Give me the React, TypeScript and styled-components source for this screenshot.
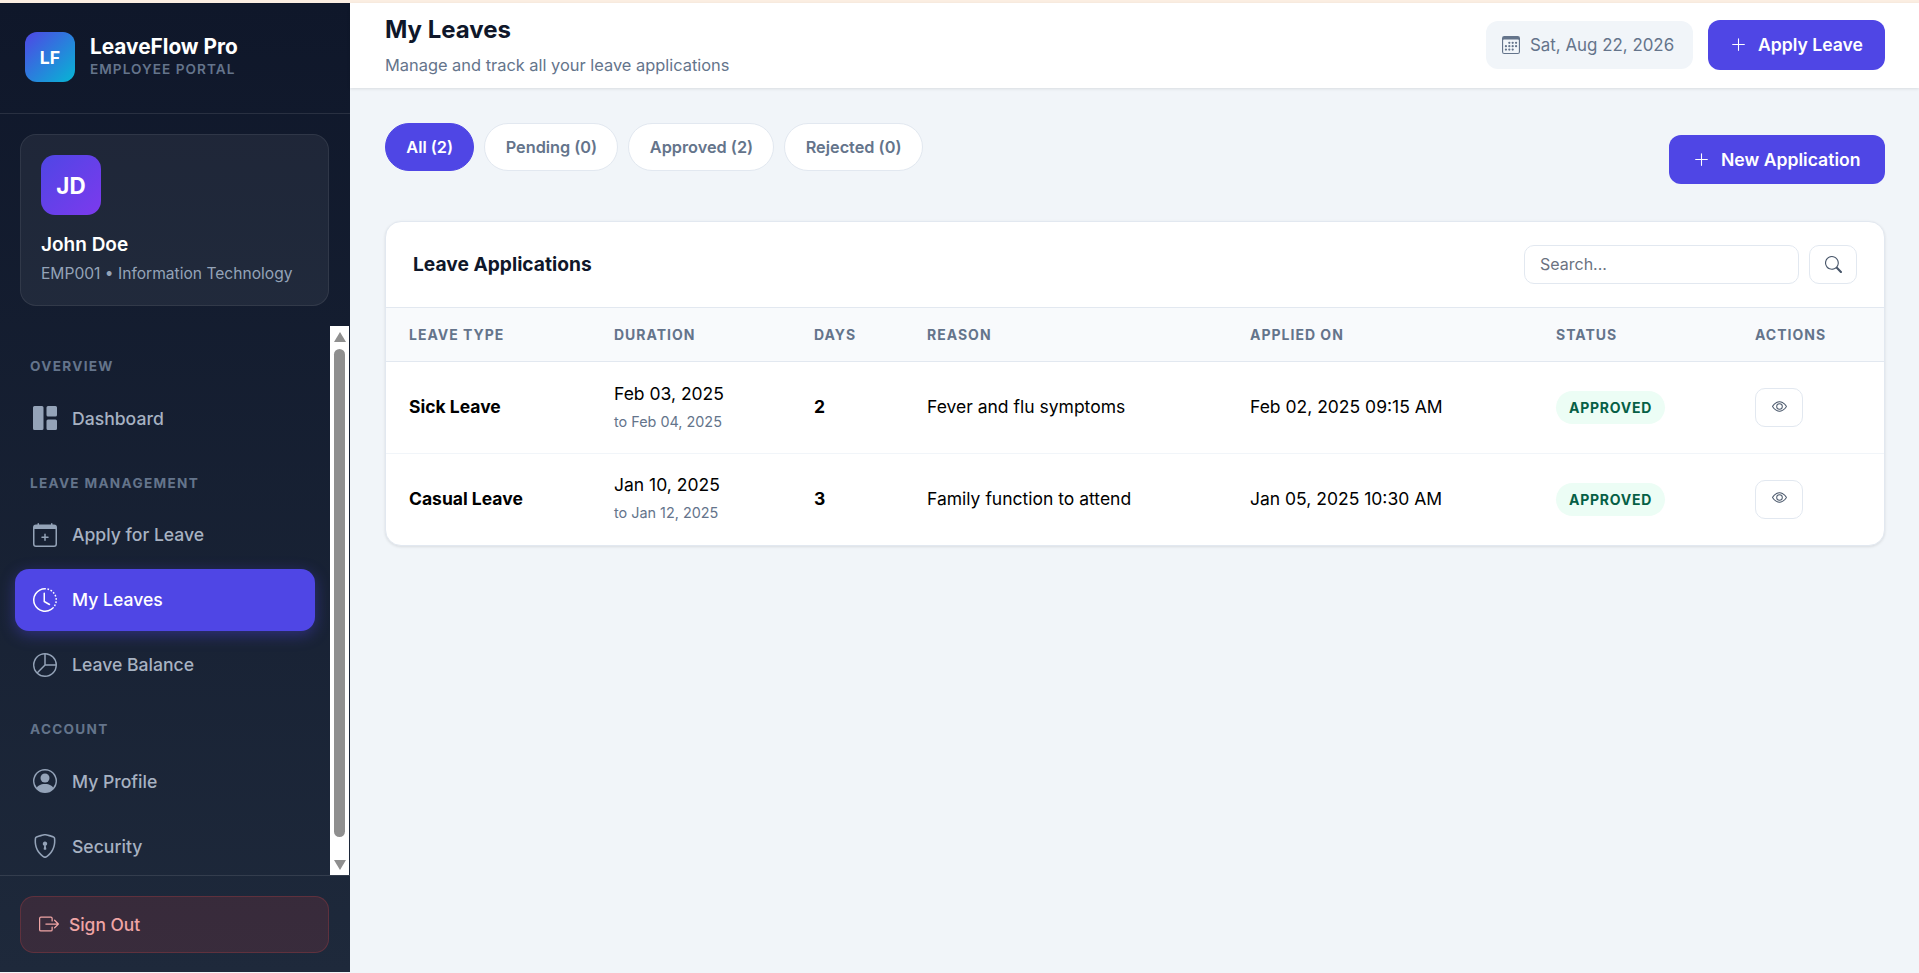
import styled, { createGlobalStyle } from 'styled-components';
import {
  BsGrid1X2Fill,
  BsCalendarPlus,
  BsClockHistory,
  BsPieChart,
  BsPersonCircle,
  BsShieldLock,
  BsBoxArrowRight,
  BsCalendar3,
  BsPlusLg,
  BsSearch,
  BsEye,
} from 'react-icons/bs';

const GlobalStyle = createGlobalStyle`
  * { box-sizing: border-box; }
  html, body { margin: 0; padding: 0; height: 100%; overflow: hidden; }
  body {
    background: #f1f5f9;
    font-family: Inter, "Liberation Sans", sans-serif;
    color: #0f172a;
  }
`;

const TopStrip = styled.div`
  height: 3px;
  background: #fbeee2;
`;

const Shell = styled.div`
  display: flex;
  height: 969px;
`;

const Sidebar = styled.aside`
  width: 350px;
  flex-shrink: 0;
  display: flex;
  flex-direction: column;
  background: linear-gradient(180deg, #0f172a 0%, #1e293b 100%);
`;

const Brand = styled.div`
  height: 111px;
  flex-shrink: 0;
  display: flex;
  align-items: center;
  gap: 15px;
  padding: 0 25px 2px;
  border-bottom: 1px solid rgba(255, 255, 255, 0.1);
`;

const BrandLogo = styled.div`
  width: 50px;
  height: 50px;
  border-radius: 12px;
  background: linear-gradient(135deg, #4f46e5, #06b6d4);
  color: #fff;
  font-size: 17.6px;
  font-weight: 700;
  display: flex;
  align-items: center;
  justify-content: center;
`;

const BrandName = styled.div`
  color: #fff;
  font-size: 20.8px;
  font-weight: 700;
  line-height: 25px;
  margin-top: -2px;
`;

const BrandSub = styled.div`
  color: #64748b;
  font-size: 13.6px;
  font-weight: 600;
  letter-spacing: 1.05px;
  line-height: 18px;
  margin-top: 1px;
`;

const ProfileWrap = styled.div`
  height: 212px;
  flex-shrink: 0;
  padding: 20px 20px 0;
`;

const ProfileCard = styled.div`
  width: 309px;
  height: 172px;
  padding: 20px;
  border-radius: 16px;
  background: rgba(255, 255, 255, 0.06);
  border: 1px solid rgba(255, 255, 255, 0.08);
`;

const Avatar = styled.div`
  width: 60px;
  height: 60px;
  border-radius: 14px;
  background: linear-gradient(135deg, #4f46e5, #7c3aed);
  color: #fff;
  font-size: 22.4px;
  font-weight: 700;
  display: flex;
  align-items: center;
  justify-content: center;
`;

const ProfileName = styled.div`
  margin-top: 16px;
  color: #fff;
  font-size: 19px;
  font-weight: 600;
  line-height: 27px;
`;

const ProfileMeta = styled.div`
  margin-top: 4px;
  color: #94a3b8;
  font-size: 15.6px;
  line-height: 24px;
  white-space: nowrap;
`;

const NavArea = styled.div`
  flex: 1;
  min-height: 0;
  display: flex;
`;

const NavList = styled.nav`
  width: 330px;
  flex-shrink: 0;
  overflow: hidden;
  padding: 0 15px;
`;

const ScrollRail = styled.div`
  width: 19px;
  display: flex;
  flex-direction: column;
  align-items: center;
  padding: 6px 0 5px;
  background: #fff;
`;

const ScrollArrow = styled.div<{ $down?: boolean }>`
  width: 0;
  height: 0;
  flex-shrink: 0;
  border-left: 6px solid transparent;
  border-right: 6px solid transparent;
  border-${({ $down }) => ($down ? 'top' : 'bottom')}: 10px solid #8f8f8f;
`;

const ScrollThumb = styled.div`
  width: 11px;
  height: 488px;
  margin: 7px 0 auto;
  border-radius: 6px;
  background: #8f8f8f;
`;

const NavLabel = styled.div<{ $first?: boolean }>`
  margin: ${({ $first }) => ($first ? '28px' : '21.5px')} 0 9px 15px;
  height: 24px;
  line-height: 24px;
  color: #64748b;
  font-size: 13.6px;
  font-weight: 700;
  letter-spacing: 1.3px;
`;

const NavItem = styled.a<{ $active?: boolean }>`
  height: 62px;
  margin-top: 3px;
  display: flex;
  align-items: center;
  gap: 15px;
  padding: 0 18px;
  border-radius: 14px;
  font-size: 17.6px;
  font-weight: 500;
  color: ${({ $active }) => ($active ? '#fff' : '#a7b2c2')};
  background: ${({ $active }) => ($active ? '#4f46e5' : 'transparent')};
  box-shadow: ${({ $active }) => ($active ? '0 4px 15px rgba(79, 70, 229, 0.4)' : 'none')};

  svg {
    width: 24px;
    height: 24px;
    flex-shrink: 0;
    color: ${({ $active }) => ($active ? '#fff' : '#94a3b8')};
  }
`;

const SidebarFooter = styled.div`
  height: 97px;
  flex-shrink: 0;
  padding: 20px;
  border-top: 1px solid rgba(255, 255, 255, 0.1);
`;

const SignOut = styled.button`
  width: 309px;
  height: 57px;
  display: flex;
  align-items: center;
  gap: 10px;
  padding: 0 18px 1px;
  border-radius: 14px;
  border: 1px solid rgba(239, 68, 68, 0.22);
  background: rgba(239, 68, 68, 0.13);
  color: #f0a5a5;
  font-family: inherit;
  font-size: 17.4px;
  font-weight: 500;

  svg {
    width: 20px;
    height: 20px;
  }
`;

const Main = styled.main`
  flex: 1;
  min-width: 0;
  display: flex;
  flex-direction: column;
`;

const Header = styled.header`
  height: 85px;
  flex-shrink: 0;
  display: flex;
  align-items: center;
  justify-content: space-between;
  padding: 0 34px 0 35px;
  background: #fff;
  box-shadow: 0 1px 3px rgba(0, 0, 0, 0.1);
`;

const HeaderText = styled.div`
  margin-bottom: 2px;
`;

const PageTitle = styled.h1`
  margin: 0;
  font-size: 24px;
  font-weight: 700;
  line-height: 36px;
  color: #0f172a;
`;

const PageSub = styled.p`
  margin: 5px 0 0;
  font-size: 16.4px;
  line-height: 24px;
  color: #64748b;
`;

const HeaderActions = styled.div`
  display: flex;
  align-items: center;
  gap: 15px;
  margin-bottom: 2px;
`;

const DateChip = styled.div`
  width: 207px;
  height: 48px;
  display: flex;
  align-items: center;
  gap: 10px;
  padding: 0 16px;
  border-radius: 12px;
  background: #f1f5f9;
  color: #64748b;
  font-size: 16.9px;
  white-space: nowrap;

  svg {
    width: 18px;
    height: 18px;
    flex-shrink: 0;
  }
`;

const PrimaryButton = styled.button<{ $h: number; $pad: number }>`
  height: ${({ $h }) => $h}px;
  display: flex;
  align-items: center;
  gap: 11px;
  padding: 0 ${({ $pad }) => $pad}px 1px;
  border: none;
  border-radius: 12px;
  background: #4f46e5;
  color: #fff;
  font-family: inherit;
  font-size: 17.6px;
  font-weight: 600;

  svg {
    width: 17px;
    height: 17px;
  }
`;

const Content = styled.div`
  flex: 1;
  padding: 35px 34px 0 35px;
`;

const Toolbar = styled.div`
  display: flex;
  justify-content: space-between;
  align-items: flex-start;
  height: 98px;
`;

const Tabs = styled.div`
  display: flex;
  gap: 10px;
`;

const Tab = styled.button<{ $active?: boolean }>`
  height: 48px;
  padding: 0 20.3px;
  border-radius: 24px;
  border: 1px solid ${({ $active }) => ($active ? '#4f46e5' : '#e2e8f0')};
  background: ${({ $active }) => ($active ? '#4f46e5' : '#fff')};
  color: ${({ $active }) => ($active ? '#fff' : '#64748b')};
  font-family: inherit;
  font-size: 16.3px;
  font-weight: 600;
`;

const NewWrap = styled.div`
  margin-top: 12px;
`;

const Card = styled.section`
  background: #fff;
  border: 1px solid #e2e8f0;
  border-radius: 16px;
  overflow: hidden;
  box-shadow: 0 1px 3px rgba(0, 0, 0, 0.1);
`;

const CardHead = styled.div`
  height: 85px;
  display: flex;
  align-items: center;
  justify-content: space-between;
  padding: 0 27px 1px;
`;

const CardTitle = styled.h2`
  margin: 0;
  font-size: 19.2px;
  font-weight: 700;
  color: #0f172a;
`;

const SearchRow = styled.div`
  display: flex;
  gap: 10px;
`;

const SearchInput = styled.input`
  width: 275px;
  height: 39px;
  padding: 0 15px;
  border: 1px solid #e2e8f0;
  border-radius: 10px;
  font-family: inherit;
  font-size: 16px;
  outline: none;

  &::placeholder {
    color: #6b7280;
  }
`;

const IconButton = styled.button<{ $w: number; $h: number; $size: number; $lift?: number }>`
  width: ${({ $w }) => $w}px;
  height: ${({ $h }) => $h}px;
  display: flex;
  align-items: center;
  justify-content: center;
  padding: 0 0 ${({ $lift }) => $lift ?? 0}px;
  border: 1px solid #e2e8f0;
  border-radius: 10px;
  background: #fff;
  color: #475569;

  svg {
    width: ${({ $size }) => $size}px;
    height: ${({ $size }) => $size}px;
  }
`;

const Table = styled.table`
  width: 100%;
  table-layout: fixed;
  border-collapse: collapse;
`;

const Th = styled.th<{ $w: number }>`
  width: ${({ $w }) => $w}px;
  height: 54px;
  padding: 0 0 0 23px;
  text-align: left;
  background: #f8fafc;
  border-top: 1px solid #e2e8f0;
  border-bottom: 1px solid #e2e8f0;
  color: #64748b;
  font-size: 14px;
  font-weight: 700;
  letter-spacing: 1px;
`;

const Td = styled.td<{ $strong?: boolean; $flush?: boolean }>`
  height: 92px;
  padding: 0 0 ${({ $flush }) => ($flush ? 0 : 2)}px 23px;
  color: #000;
  font-size: 17.5px;
  font-weight: ${({ $strong }) => ($strong ? 700 : 400)};
  border-bottom: 1px solid #f1f5f9;

  tr:last-child & {
    height: 91px;
    border-bottom: none;
  }
`;

const DateBlock = styled.div`
  margin-bottom: 2px;
`;

const DateMain = styled.div`
  line-height: 28px;
`;

const DateSub = styled.div`
  margin-top: 4px;
  font-size: 14.4px;
  line-height: 20px;
  color: #64748b;
`;

const Badge = styled.span`
  display: inline-flex;
  align-items: center;
  height: 33px;
  padding: 0 13px;
  border-radius: 17px;
  background: #ecfdf5;
  color: #065f46;
  font-size: 14px;
  font-weight: 700;
  letter-spacing: 0.75px;
`;

const columns = [
  { label: 'LEAVE TYPE', w: 205 },
  { label: 'DURATION', w: 200 },
  { label: 'DAYS', w: 113 },
  { label: 'REASON', w: 323 },
  { label: 'APPLIED ON', w: 306 },
  { label: 'STATUS', w: 199 },
  { label: 'ACTIONS', w: 152 },
];

const leaves = [
  {
    type: 'Sick Leave',
    from: 'Feb 03, 2025',
    to: 'to Feb 04, 2025',
    days: 2,
    reason: 'Fever and flu symptoms',
    applied: 'Feb 02, 2025 09:15 AM',
  },
  {
    type: 'Casual Leave',
    from: 'Jan 10, 2025',
    to: 'to Jan 12, 2025',
    days: 3,
    reason: 'Family function to attend',
    applied: 'Jan 05, 2025 10:30 AM',
  },
];

export default function App() {
  return (
    <>
      <GlobalStyle />
      <TopStrip />
      <Shell>
        <Sidebar>
          <Brand>
            <BrandLogo>LF</BrandLogo>
            <div>
              <BrandName>LeaveFlow Pro</BrandName>
              <BrandSub>EMPLOYEE PORTAL</BrandSub>
            </div>
          </Brand>
          <ProfileWrap>
            <ProfileCard>
              <Avatar>JD</Avatar>
              <ProfileName>John Doe</ProfileName>
              <ProfileMeta>EMP001 • Information Technology</ProfileMeta>
            </ProfileCard>
          </ProfileWrap>
          <NavArea>
            <NavList>
              <NavLabel $first>OVERVIEW</NavLabel>
              <NavItem><BsGrid1X2Fill />Dashboard</NavItem>
              <NavLabel>LEAVE MANAGEMENT</NavLabel>
              <NavItem><BsCalendarPlus />Apply for Leave</NavItem>
              <NavItem $active><BsClockHistory />My Leaves</NavItem>
              <NavItem><BsPieChart />Leave Balance</NavItem>
              <NavLabel>ACCOUNT</NavLabel>
              <NavItem><BsPersonCircle />My Profile</NavItem>
              <NavItem><BsShieldLock />Security</NavItem>
            </NavList>
            <ScrollRail>
              <ScrollArrow />
              <ScrollThumb />
              <ScrollArrow $down />
            </ScrollRail>
          </NavArea>
          <SidebarFooter>
            <SignOut><BsBoxArrowRight />Sign Out</SignOut>
          </SidebarFooter>
        </Sidebar>
        <Main>
          <Header>
            <HeaderText>
              <PageTitle>My Leaves</PageTitle>
              <PageSub>Manage and track all your leave applications</PageSub>
            </HeaderText>
            <HeaderActions>
              <DateChip><BsCalendar3 />Sat, Aug 22, 2026</DateChip>
              <PrimaryButton $h={50} $pad={22}><BsPlusLg />Apply Leave</PrimaryButton>
            </HeaderActions>
          </Header>
          <Content>
            <Toolbar>
              <Tabs>
                <Tab $active>All (2)</Tab>
                <Tab>Pending (0)</Tab>
                <Tab>Approved (2)</Tab>
                <Tab>Rejected (0)</Tab>
              </Tabs>
              <NewWrap>
                <PrimaryButton $h={49} $pad={24.5}><BsPlusLg />New Application</PrimaryButton>
              </NewWrap>
            </Toolbar>
            <Card>
              <CardHead>
                <CardTitle>Leave Applications</CardTitle>
                <SearchRow>
                  <SearchInput placeholder="Search..." />
                  <IconButton $w={48} $h={39} $size={17}><BsSearch /></IconButton>
                </SearchRow>
              </CardHead>
              <Table>
                <thead>
                  <tr>
                    {columns.map((c) => (
                      <Th key={c.label} $w={c.w}>{c.label}</Th>
                    ))}
                  </tr>
                </thead>
                <tbody>
                  {leaves.map((l) => (
                    <tr key={l.type}>
                      <Td $strong>{l.type}</Td>
                      <Td>
                        <DateBlock>
                          <DateMain>{l.from}</DateMain>
                          <DateSub>{l.to}</DateSub>
                        </DateBlock>
                      </Td>
                      <Td $strong>{l.days}</Td>
                      <Td>{l.reason}</Td>
                      <Td>{l.applied}</Td>
                      <Td $flush><Badge>APPROVED</Badge></Td>
                      <Td $flush>
                        <IconButton $w={48} $h={39} $size={15} $lift={3}><BsEye /></IconButton>
                      </Td>
                    </tr>
                  ))}
                </tbody>
              </Table>
            </Card>
          </Content>
        </Main>
      </Shell>
    </>
  );
}
